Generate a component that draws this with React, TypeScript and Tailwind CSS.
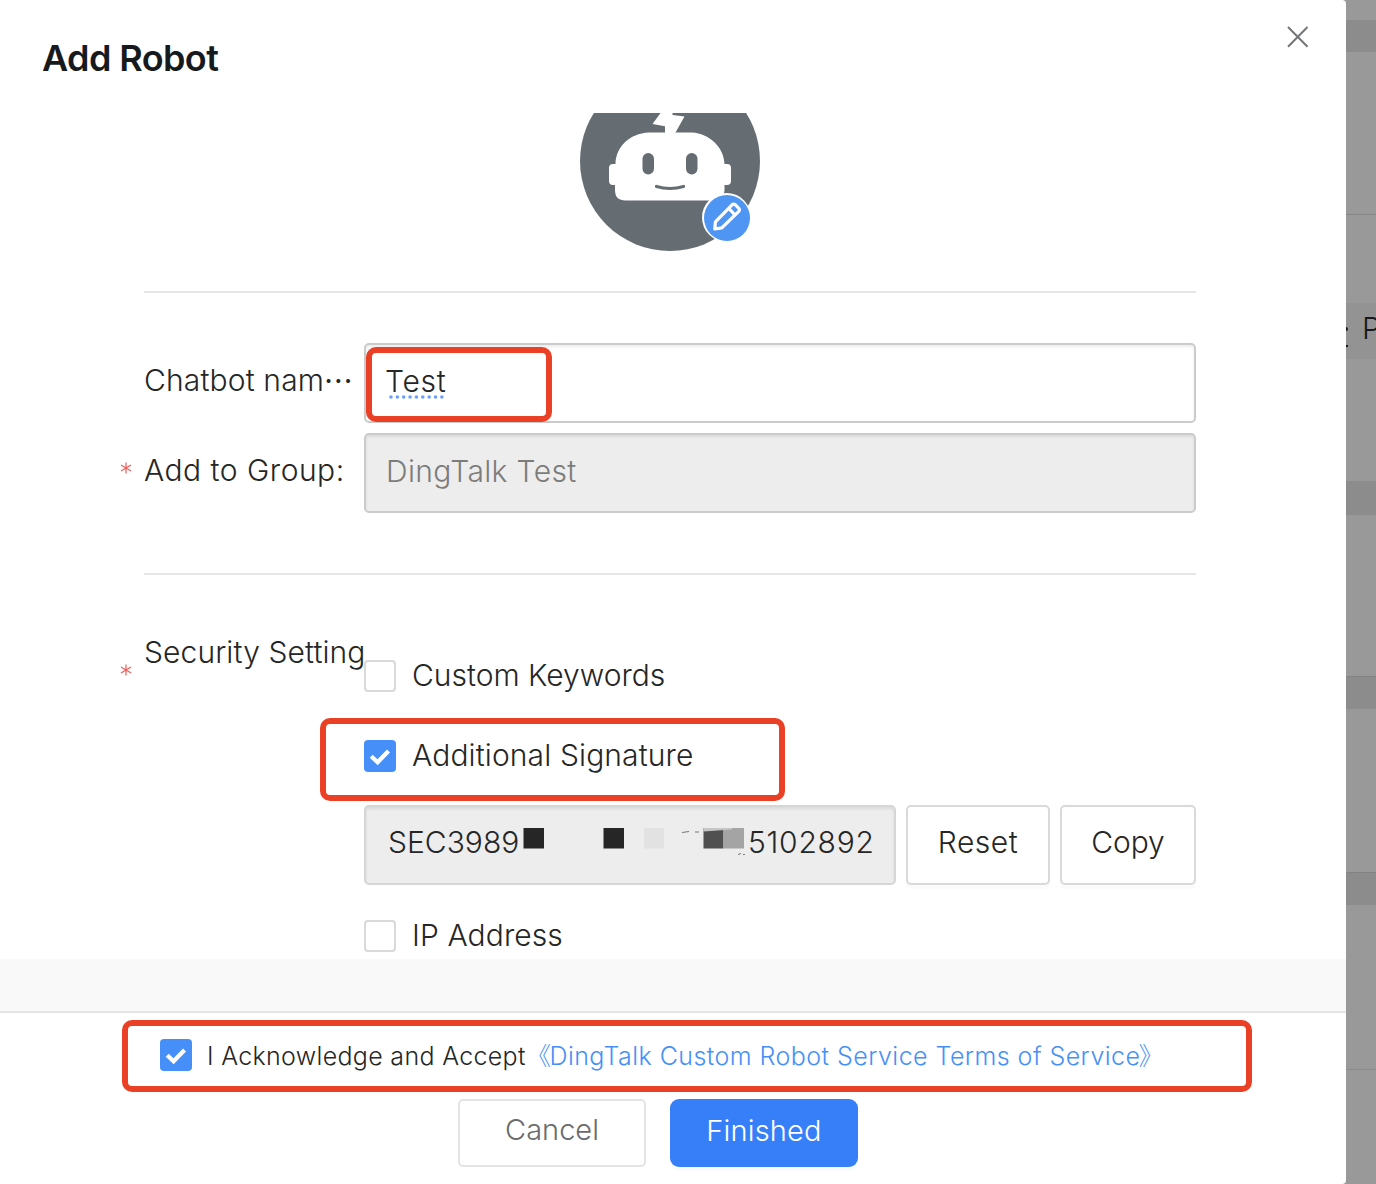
import React from 'react';

function RobotAvatar() {
  return (
    <div className="relative -mt-[42px] h-[180px] w-[180px] shrink-0">
      <svg viewBox="0 0 180 180" className="block h-full w-full">
        <circle cx="90" cy="90" r="90" fill="#656d73" />
        <path
          fill="#fff"
          d="M82 40 L72.500 53 L85 55.300 V61.500 H69 C49 62.500 36 76 35.500 93 H33 Q29 93 29 97 V110 Q29 114 33 114 H35 V119 Q35 129.500 45.500 129.500 H134.500 Q144.500 129.500 144.500 119 V114 H147 Q151 114 151 110 V97 Q151 93 147 93 H144.500 C144 76 129 62.500 112 61.500 H95.500 L104.500 45.500 L92.500 44 V40 Z"
        />
        <rect x="62.500" y="82" width="11.500" height="21.500" rx="5.700" fill="#656d73" />
        <rect x="106" y="82" width="11.500" height="21.500" rx="5.700" fill="#656d73" />
        <path d="M76.500 115.500 Q90 119.500 103.500 115.500" fill="none" stroke="#656d73" strokeWidth="3.200" strokeLinecap="round" />
      </svg>
      <div className="absolute left-[122px] top-[122px] h-[49px] w-[49px]">
        <svg viewBox="0 0 49 49" className="block h-full w-full">
          <circle cx="24.500" cy="24.500" r="24.500" fill="#fff" />
          <circle cx="25" cy="25" r="23" fill="#4f95f3" />
          <g fill="none" stroke="#fff" strokeWidth="3.200" strokeLinejoin="round">
            <path d="M12.800 36 L13.400 28.800 L30.300 11.600 Q31.700 10.500 33.200 11.700 L36.800 15.400 Q38 16.800 36.800 18.300 L19.800 34.800 Z" />
            <path d="M26.800 15.500 L33 21.800" />
          </g>
        </svg>
      </div>
    </div>
  );
}

function Checkbox({ checked = false }: { checked?: boolean }) {
  return checked ? (
    <span className="block h-8 w-8 shrink-0 rounded-[4px] bg-[#468ff8]">
      <svg viewBox="0 0 32 32" className="block h-8 w-8">
        <path d="M7.200 16.200 L13.600 22.300 L24.500 11" fill="none" stroke="#fff" strokeWidth="4.200" />
      </svg>
    </span>
  ) : (
    <span className="block h-8 w-8 shrink-0 rounded-[4px] border-2 border-[#d9d9d9] bg-white" />
  );
}

function RequiredMark() {
  return (
    <svg viewBox="0 0 12 12" className="h-3 w-3">
      <path d="M6 0.500 V11.500 M1 3 L11 9 M11 3 L1 9" stroke="#ee5c5c" strokeWidth="1.200" />
    </svg>
  );
}

function Backdrop() {
  return (
    <div className="flex w-[30px] shrink-0 flex-col overflow-hidden bg-[#999999]">
      <div className="h-5" />
      <div className="h-8 bg-[#8c8c8c]" />
      <div className="h-[163px] border-b border-[#868686]" />
      <div className="h-[88px]" />
      <div className="relative h-14 bg-[#939393] text-[30px] leading-[51px] text-[#15191c]">
        <span className="absolute left-[16px] top-0">P</span>
        <span className="absolute left-0 top-[24px] h-[4px] w-[1.500px] rounded-r bg-[#15191c]" />
        <span className="absolute left-0 top-[42px] h-[2px] w-[2px] bg-[#15191c]" />
      </div>
      <div className="h-[122px]" />
      <div className="h-[34px] bg-[#8c8c8c]" />
      <div className="h-[161px]" />
      <div className="h-[33px] border-t border-[#828282] bg-[#8c8c8c]" />
      <div className="h-[163px]" />
      <div className="h-[33px] border-t border-[#828282] bg-[#8c8c8c]" />
      <div className="h-[164px]" />
      <div className="h-px bg-[#8c8c8c]" />
    </div>
  );
}

export default function App() {
  return (
    <div className="flex h-[1184px] w-[1376px] overflow-hidden bg-[#999999] font-['Inter','Noto_Sans_CJK_SC',sans-serif] font-light text-[#262626]">
      <div className="relative flex w-[1346px] shrink-0 flex-col rounded-r-[4px] bg-white">
        <header className="flex h-[113px] shrink-0 justify-between pl-[42px] pr-[37px]">
          <h1 className="pt-[34px] text-[36px] font-semibold leading-[48px] tracking-[-0.600px] text-[#171a1d]">Add Robot</h1>
          <svg viewBox="0 0 22 22" className="mt-[26px] h-[22px] w-[22px]">
            <path d="M1 1 L20.500 20.700 M20.500 1 L1 20.700" stroke="#747677" strokeWidth="2" />
          </svg>
        </header>

        <main className="flex h-[846px] shrink-0 flex-col overflow-hidden pl-[144px] pr-[150px] text-[30px] leading-[38px]">
          <div className="flex h-[180px] justify-center border-b-2 border-[#e5e6e6]">
            <RobotAvatar />
          </div>

          <div className="mt-[50px] flex h-20">
            <label className="w-[220px] shrink-0 whitespace-nowrap pt-[18px] tracking-[0.150px]">
              Chatbot nam<span className="font-normal tracking-[1.200px]">···</span>
            </label>
            <div className="relative flex-1 rounded-[5px] border-2 border-[#cbcbcb] pl-[19px] pt-[17px] shadow-[inset_0_2px_3px_rgba(0,0,0,0.08)]">
              <span className="tracking-[0.750px]">Test</span>
              <svg viewBox="0 0 56 4" className="absolute left-[23px] top-[50px] h-1 w-14">
                <path d="M2 2 H56" stroke="#6da0f8" strokeWidth="3.600" strokeLinecap="round" strokeDasharray="0 6.360" />
              </svg>
            </div>
          </div>

          <div className="mt-[10px] flex h-20">
            <label className="relative w-[220px] shrink-0 whitespace-nowrap pt-[18px] tracking-[0.500px]">
              <span className="absolute -left-[24px] top-[29px] flex"><RequiredMark /></span>
              Add to Group:
            </label>
            <div className="flex-1 rounded-[5px] border-2 border-[#cbcbcb] bg-[#ededed] pl-5 pt-[17px] tracking-[0.350px] text-[#7c7c7c] shadow-[inset_0_2px_3px_rgba(0,0,0,0.08)]">
              DingTalk Test
            </div>
          </div>

          <div className="mt-[60px] h-0.5 shrink-0 bg-[#e5e6e6]" />

          <div className="mt-[58px] flex">
            <div className="relative w-[220px] shrink-0 whitespace-nowrap tracking-[0.100px]">
              <span className="absolute -left-[24px] top-[31px] flex"><RequiredMark /></span>
              Security Setting
            </div>
            <div className="flex-1 pt-[27px]">
              <div className="flex h-8 items-center gap-4">
                <Checkbox />
                <span className="pb-0.5">Custom Keywords</span>
              </div>
              <div className="mt-12 flex h-8 items-center gap-4">
                <Checkbox checked />
                <span className="pb-0.5 tracking-[0.130px]">Additional Signature</span>
              </div>
              <div className="mt-[33px] flex h-20 gap-[10px]">
                <div className="flex w-[532px] items-center rounded-[5px] border-2 border-[#d6d6d6] bg-[#ededed] pb-[5px] pl-[22px] shadow-[inset_0_2px_3px_rgba(0,0,0,0.08)]">
                  <span className="w-[134px] whitespace-nowrap pb-0.5">SEC3989</span>
                  <svg viewBox="0 0 226 32" className="-mt-[5px] h-8 w-[226px] shrink-0">
                    <rect x="1.500" y="4" width="20.500" height="20.500" fill="#262626" />
                    <rect x="81.500" y="4" width="20.500" height="20.500" fill="#262626" />
                    <rect x="122" y="4" width="20" height="20.500" fill="#e2e2e2" />
                    <rect x="181.500" y="4" width="20" height="20.500" fill="#505050" />
                    <rect x="201.500" y="4" width="20.500" height="20.500" fill="#a4a4a4" />
                    <path d="M181.500 4 H210 V5.500 L181.500 7.500 Z" fill="#c6c6c6" />
                    <path d="M160 8.500 L167 7.500 M173 8 H177 M216 30.500 L219 29.500 M221 30.500 H223" stroke="#777" strokeWidth="1" />
                  </svg>
                  <span className="whitespace-nowrap pb-0.5 tracking-[0.750px]">5102892</span>
                </div>
                <button className="w-36 rounded-[5px] border-2 border-[#d9d9d9] bg-white pb-[7px] tracking-[0.500px] shadow-[0_4px_0_rgba(0,0,0,0.015)]">Reset</button>
                <button className="w-[136px] rounded-[5px] border-2 border-[#d9d9d9] bg-white pb-[7px] tracking-[-0.100px] shadow-[0_4px_0_rgba(0,0,0,0.015)]">Copy</button>
              </div>
              <div className="mt-[35px] flex h-8 items-center gap-4">
                <Checkbox />
                <span className="pb-0.5 tracking-[0.100px]">IP Address</span>
              </div>
            </div>
          </div>
        </main>

        <div className="h-[54px] shrink-0 border-b-2 border-[#e4e4e4] bg-[#f9f9f9]" />

        <footer className="flex flex-1 flex-col pt-[26px]">
          <div className="flex h-8 items-center pl-40 text-[25px] leading-8">
            <Checkbox checked />
            <span className="ml-[15px] w-[319px] whitespace-nowrap pt-[2px] tracking-[0.320px]">I Acknowledge and Accept</span>
            <a className="whitespace-nowrap pt-[2px] tracking-[0.450px] text-[#4690f7]">
              <span className="mr-[-2px]">《</span>DingTalk Custom Robot Service Terms of Service<span className="-ml-[2px]">》</span>
            </a>
          </div>
          <div className="mt-7 flex gap-6 pl-[458px] text-[29px]">
            <button className="h-[68px] w-[188px] rounded-[5px] border-2 border-[#e4e4e4] pb-[6px] text-[#696b6d]">Cancel</button>
            <button className="h-[68px] w-[188px] rounded-[9px] bg-[#377ff8] pb-1 tracking-[0.200px] text-white shadow-[0_4px_0_rgba(0,0,0,0.015)]">Finished</button>
          </div>
        </footer>

        <div className="pointer-events-none absolute left-[366px] top-[347px] h-[75px] w-[186px] rounded-[10px] border-[6px] border-[#ea4025]" />
        <div className="pointer-events-none absolute left-[320px] top-[718px] h-[83px] w-[465px] rounded-[10px] border-[6px] border-[#ea4025]" />
        <div className="pointer-events-none absolute left-[122px] top-[1020px] h-[72px] w-[1130px] rounded-[10px] border-[6px] border-[#ea4025]" />
      </div>
      <Backdrop />
    </div>
  );
}
